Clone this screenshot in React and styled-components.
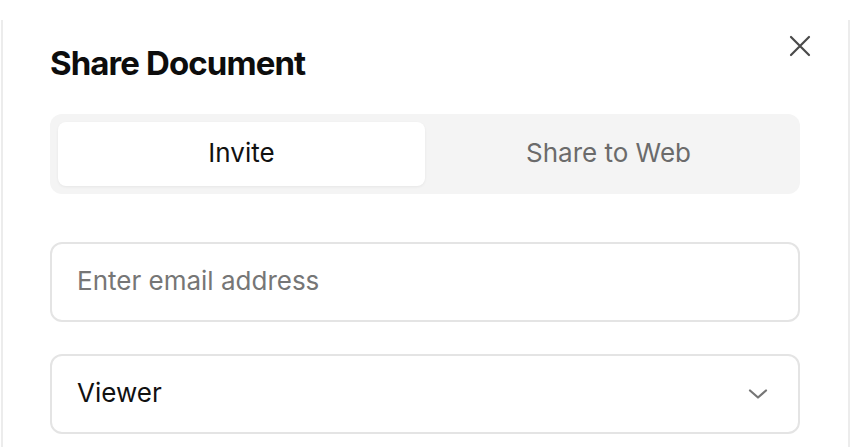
import styled, { createGlobalStyle } from "styled-components";
import { useState } from "react";

const GlobalStyle = createGlobalStyle`
  body {
    margin: 0;
    background: #ffffff;
    font-family: Inter, "Noto Sans", sans-serif;
    color: #111111;
    overflow: hidden;
  }
`;

const Dialog = styled.div`
  margin-top: 20px;
  margin-left: 1px;
  width: 849px;
  box-sizing: border-box;
  border-left: 2px solid #ececec;
  border-right: 2px solid #ececec;
  padding: 20px 48px 40px 47px;
`;

const Header = styled.div`
  display: flex;
  align-items: flex-start;
  justify-content: space-between;
  margin-bottom: 28px;
`;

const Title = styled.h2`
  margin: 0;
  font-size: 33px;
  line-height: 46px;
  font-weight: 700;
  letter-spacing: -0.9px;
  color: #0d0d0d;
`;

const CloseButton = styled.button`
  border: 0;
  background: none;
  padding: 0;
  margin-top: -6px;
  margin-right: -12px;
  width: 24px;
  height: 24px;
  color: #4a4a4a;
  cursor: pointer;
  display: flex;
`;

const Tabs = styled.div`
  display: grid;
  grid-template-columns: 1fr 1fr;
  padding: 8px;
  background: #f4f4f4;
  border-radius: 12px;
  margin-bottom: 48px;
`;

const Tab = styled.button`
  height: 64px;
  border: 0;
  border-radius: 8px;
  padding: 0 0 3px;
  font-family: inherit;
  font-size: 26px;
  color: ${(p) => (p.$active ? "#111111" : "#6b6b6b")};
  background: ${(p) => (p.$active ? "#ffffff" : "transparent")};
  box-shadow: ${(p) => (p.$active ? "0 1px 3px rgba(0,0,0,0.06)" : "none")};
  cursor: pointer;
`;

const Field = styled.div`
  display: flex;
  align-items: center;
  justify-content: space-between;
  height: 80px;
  box-sizing: border-box;
  border: 2px solid #e4e4e4;
  border-radius: 12px;
  padding: 0 28px 3px 25px;
  margin-bottom: ${(p) => p.$gap || 0}px;
`;

const EmailInput = styled.input`
  border: 0;
  outline: none;
  width: 100%;
  font-family: inherit;
  font-size: 26px;
  color: #111111;
  background: transparent;
  padding: 0;

  &::placeholder {
    color: #767676;
  }
`;

const SelectValue = styled.span`
  font-size: 26px;
  color: #111111;
`;

const Chevron = styled.svg`
  width: 24px;
  height: 24px;
  margin-top: 2px;
  color: #767676;
`;

export default function App() {
  const [tab, setTab] = useState("invite");

  return (
    <>
      <GlobalStyle />
      <Dialog>
        <Header>
          <Title>Share Document</Title>
          <CloseButton aria-label="Close">
            <svg width="24" height="24" viewBox="0 0 24 24" fill="none" stroke="currentColor" strokeWidth="2.2" strokeLinecap="round">
              <path d="M3 3l18 18M21 3L3 21" />
            </svg>
          </CloseButton>
        </Header>
        <Tabs>
          <Tab $active={tab === "invite"} onClick={() => setTab("invite")}>
            Invite
          </Tab>
          <Tab $active={tab === "web"} onClick={() => setTab("web")}>
            Share to Web
          </Tab>
        </Tabs>
        <Field $gap={32}>
          <EmailInput placeholder="Enter email address" />
        </Field>
        <Field>
          <SelectValue>Viewer</SelectValue>
          <Chevron viewBox="0 0 24 24" fill="none" stroke="currentColor" strokeWidth="2.2" strokeLinecap="round" strokeLinejoin="round">
            <path d="M4 8.5l8 7 8-7" />
          </Chevron>
        </Field>
      </Dialog>
    </>
  );
}
